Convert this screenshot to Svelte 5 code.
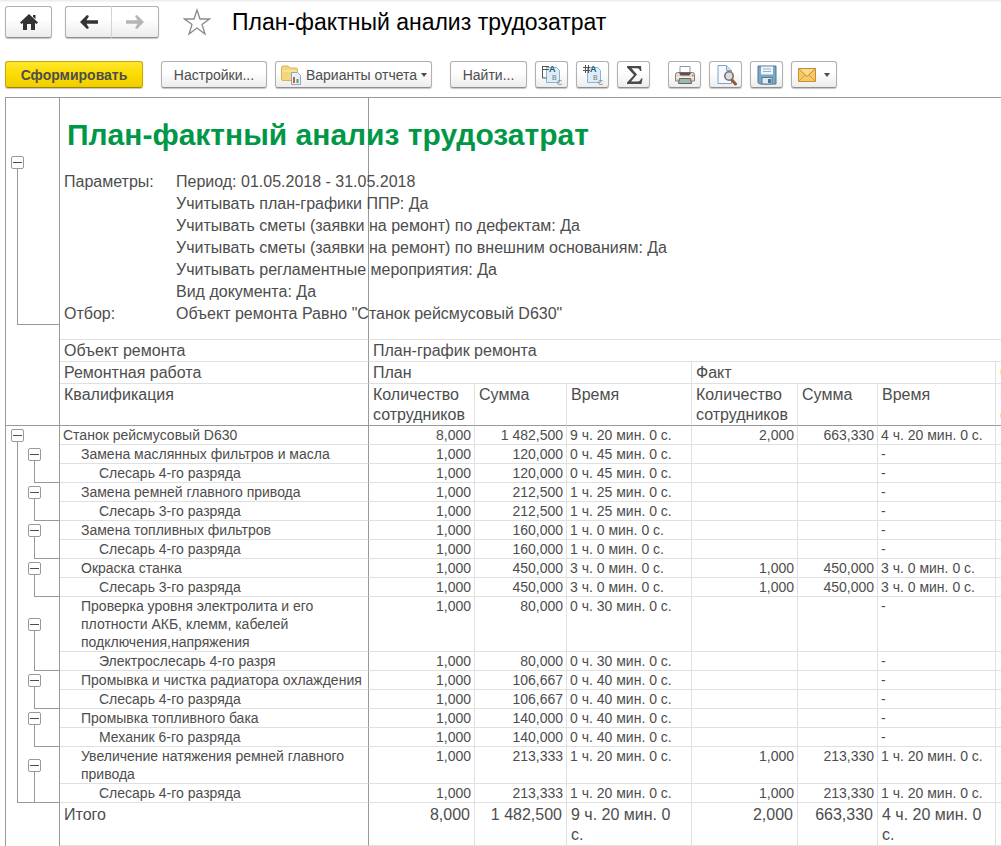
<script lang="ts">
  type Item = {
    name: string;
    plan: string[];
    fact: string[];
    worker: string;
  };

  const title = "План-фактный анализ трудозатрат";

  const params = [
    ["Параметры:", "Период: 01.05.2018 - 31.05.2018"],
    ["", "Учитывать план-графики ППР: Да"],
    ["", "Учитывать сметы (заявки на ремонт) по дефектам: Да"],
    ["", "Учитывать сметы (заявки на ремонт) по внешним основаниям: Да"],
    ["", "Учитывать регламентные мероприятия: Да"],
    ["", "Вид документа: Да"],
    ["Отбор:", 'Объект ремонта Равно "Станок рейсмусовый D630"'],
  ];

  const none = ["", "", "-"];

  const items: Item[] = [
    { name: "Замена маслянных фильтров и масла", plan: ["1,000", "120,000", "0 ч. 45 мин. 0 с."], fact: none, worker: "Слесарь 4-го разряда" },
    { name: "Замена ремней главного привода", plan: ["1,000", "212,500", "1 ч. 25 мин. 0 с."], fact: none, worker: "Слесарь 3-го разряда" },
    { name: "Замена топливных фильтров", plan: ["1,000", "160,000", "1 ч. 0 мин. 0 с."], fact: none, worker: "Слесарь 4-го разряда" },
    { name: "Окраска станка", plan: ["1,000", "450,000", "3 ч. 0 мин. 0 с."], fact: ["1,000", "450,000", "3 ч. 0 мин. 0 с."], worker: "Слесарь 3-го разряда" },
    { name: "Проверка уровня электролита и его плотности АКБ, клемм, кабелей подключения,напряжения", plan: ["1,000", "80,000", "0 ч. 30 мин. 0 с."], fact: none, worker: "Электрослесарь 4-го разря" },
    { name: "Промывка и чистка радиатора охлаждения", plan: ["1,000", "106,667", "0 ч. 40 мин. 0 с."], fact: none, worker: "Слесарь 4-го разряда" },
    { name: "Промывка топливного бака", plan: ["1,000", "140,000", "0 ч. 40 мин. 0 с."], fact: none, worker: "Механик 6-го разряда" },
    { name: "Увеличение натяжения ремней главного привода", plan: ["1,000", "213,333", "1 ч. 20 мин. 0 с."], fact: ["1,000", "213,330", "1 ч. 20 мин. 0 с."], worker: "Слесарь 4-го разряда" },
  ];

  let showParams = $state(true);
  let showItems = $state(true);
  let open = $state(items.map(() => true));
</script>

{#snippet toggle(expanded: boolean, label: string, onclick: () => void)}
  <button class="toggle" aria-expanded={expanded} aria-label={label} {onclick}>
    <svg viewBox="0 0 11 11">
      <path d="M1 5.5h9" />
      {#if !expanded}<path d="M5.5 1v9" />{/if}
    </svg>
  </button>
{/snippet}

{#snippet values(cells: string[])}
  <td class="num">{cells[0]}</td>
  <td class="num">{cells[1]}</td>
  <td>{cells[2]}</td>
{/snippet}

{#snippet sheetIcon(plus: boolean)}
  <svg class="icon" viewBox="0 0 22 22">
    <path d="M5.500 3.500h10l3 3v12h-13z" fill="#dcedf9" stroke="#8bb3cf" />
    {#if plus}
      <path d="M1 3.500h7M1 6.500h7M3.500 1v8M6.500 1v8" stroke="#555" fill="none" />
    {:else}
      <path d="M1 2.500h7M1 5.500h7M1.500 2v12h4" stroke="#555" fill="none" />
    {/if}
    <text x="8" y="8" class="mark a">A</text>
    <text x="11" y="16" class="mark">B</text>
    <text x="16" y="21" class="mark">C</text>
  </svg>
{/snippet}

<header class="top">
  <button class="btn nav" aria-label="Начальная страница">
    <svg width="20" height="18" viewBox="0 0 20 18">
      <path d="M10 1 L19 9.5 L17.5 11 L16 10 V17 H12 V11 H8 V17 H4 V10 L2.5 11 L1 9.5 Z M14 2h2.500v4l-2.500-2z" fill="#333" />
    </svg>
  </button>
  <div class="history">
    <button class="btn nav" aria-label="Назад">
      <svg width="18" height="14" viewBox="0 0 18 14">
        <path d="M0 7 L7 0 L9 1 L6.500 5.300 H18 V8.700 H6.500 L9 13 L7 14 Z" fill="#333" />
      </svg>
    </button>
    <button class="btn nav" aria-label="Вперед">
      <svg width="18" height="14" viewBox="0 0 18 14">
        <path d="M18 7 L11 0 L9 1 L11.500 5.300 H0 V8.700 H11.500 L9 13 L11 14 Z" fill="#b5b5b5" />
      </svg>
    </button>
  </div>
  <button class="star" aria-label="Добавить в избранное">
    <svg width="28" height="28" viewBox="0 0 28 28">
      <path d="M14 2 L17 11 H26.500 L19 16.500 L22 26 L14 20 L6 26 L9 16.500 L1.500 11 H11 Z" fill="#fff" stroke="#8a8a8a" stroke-width="1.300" />
    </svg>
  </button>
  <h1>{title}</h1>
</header>

<div class="toolbar">
  <div class="group">
    <button class="btn primary">Сформировать</button>
  </div>
  <div class="group">
    <button class="btn settings">Настройки...</button>
    <button class="btn variants">
      <svg class="icon" viewBox="0 0 22 22">
        <path d="M1.500 3.500 q0-1.500 1.500-1.500h5l2 2h6q1.500 0 1.500 1.500V15q0 1.500-1.500 1.500H3Q1.500 16.500 1.500 15z" fill="#f3d778" stroke="#d6b45a" />
        <path d="M2.500 7h14" stroke="#fbeeb8" />
        <path d="M11.500 8.500h6l3 3v9h-9z" fill="#e6f2fb" stroke="#8aa9bf" />
        <path d="M14 19v-6" stroke="#d9534f" stroke-width="2" />
        <path d="M17.500 19v-4" stroke="#5a9a4a" stroke-width="2" />
      </svg>
      Варианты отчета
      <span class="caret"></span>
    </button>
  </div>
  <div class="group">
    <button class="btn find">Найти...</button>
    <button class="btn tool" aria-label="Развернуть группы">{@render sheetIcon(false)}</button>
    <button class="btn tool" aria-label="Свернуть группы">{@render sheetIcon(true)}</button>
    <button class="btn tool" aria-label="Сумма">
      <svg class="icon" viewBox="0 0 22 22">
        <path d="M4 2h14l.5 5h-1.500q-.5-2.800-3-2.800H8.500L14 10.500 8 17.500h6.500q3 0 3.500-3h1.500L18.500 20H4v-1.500l7-7.500L4 3.500z" fill="#4a4a4a" />
      </svg>
    </button>
  </div>
  <div class="group">
    <button class="btn tool" aria-label="Печать">
      <svg class="icon" viewBox="0 0 22 22">
        <path d="M6 9V2.500h10V9" fill="#fff" stroke="#8d9aa5" />
        <path d="M3.500 8.500h15q2 0 2 2V17h-19v-6.500q0-2 2-2z" fill="#e4d9cb" stroke="#8a8078" />
        <path d="M5 8.500h12l-1.500 3h-9z" fill="#5c5148" />
        <path d="M2 13.500h18" stroke="#f7f3ec" />
        <path d="M5.500 14.500h11l1 5h-13z" fill="#9db8ae" stroke="#666" />
        <path d="M18 11.500h1.500" stroke="#d2672c" stroke-width="1.500" />
      </svg>
    </button>
    <button class="btn tool" aria-label="Предварительный просмотр">
      <svg class="icon" viewBox="0 0 22 22">
        <path d="M3 1.500h8.500l5 5v13H3z" fill="#f3f9fe" stroke="#7ba4c4" />
        <path d="M11.500 1.500v5h5" fill="#cfe4f4" stroke="#7ba4c4" />
        <path d="M16.500 15.500l4 4.500" stroke="#8d5a3c" stroke-width="3" stroke-linecap="round" />
        <circle cx="14" cy="12" r="4.200" fill="#c9e2f3" stroke="#96664a" stroke-width="1.600" />
      </svg>
    </button>
    <button class="btn tool" aria-label="Сохранить">
      <svg class="icon" viewBox="0 0 22 22">
        <path d="M2 2h18v18H3.500L2 18.500z" fill="#7ba7c4" stroke="#4f7690" />
        <path d="M5 2.500h12v8H5z" fill="#eef6fb" />
        <path d="M7 5h8M7 7.500h8" stroke="#96b3c6" />
        <path d="M6 13.500h10V20H6z" fill="#e4ebef" stroke="#567a92" />
        <path d="M12 15h3v4h-3z" fill="#4f7690" />
      </svg>
    </button>
    <button class="btn mail" aria-label="Отправить по почте">
      <svg width="18" height="14" viewBox="0 0 18 14">
        <path d="M.5 .5h17v13H.5z" fill="#f7c866" stroke="#c98d2c" />
        <path d="M1 13l6-6M17 13l-6-6" stroke="#d99e3c" fill="none" />
        <path d="M1 1l8 7.500L17 1" fill="#fad98c" stroke="#c98d2c" />
      </svg>
      <span class="caret"></span>
    </button>
  </div>
</div>

<main class="sheet">
  <table>
    <colgroup>
      <col class="c-outer" />
      <col class="c-inner" />
      <col class="c-name" />
      <col class="c-count" />
      <col class="c-sum" />
      <col class="c-time" />
      <col class="c-count" />
      <col class="c-fact-sum" />
      <col class="c-fact-time" />
      <col class="c-count" />
    </colgroup>

    <tbody class="intro">
      <tr>
        <td></td>
        <td class="edge"></td>
        <td class="name"><h2>{title}</h2></td>
        <td colspan="7"></td>
      </tr>
      <tr class="gap">
        <td class="tree" class:from={showParams}>
          {@render toggle(showParams, "Параметры отчета", () => (showParams = !showParams))}
        </td>
        <td class="edge"></td>
        <td class="name"></td>
        <td colspan="7"></td>
      </tr>
      {#if showParams}
        {#each params as [label, value], i}
          <tr>
            <td class="tree through" class:last={i === params.length - 1}></td>
            <td class="edge"></td>
            <td class="name">
              <div class="param"><span>{label}</span><span>{value}</span></div>
            </td>
            <td colspan="7"></td>
          </tr>
        {/each}
      {/if}
      <tr class="tail">
        <td></td>
        <td class="edge"></td>
        <td class="name line"></td>
        <td class="line" colspan="7"></td>
      </tr>
    </tbody>

    <tbody class="heads">
      <tr>
        <td></td>
        <td class="edge"></td>
        <th class="name">Объект ремонта</th>
        <th colspan="7">План-график ремонта</th>
      </tr>
      <tr>
        <td></td>
        <td class="edge"></td>
        <th class="name">Ремонтная работа</th>
        <th colspan="3">План</th>
        <th colspan="3">Факт</th>
        <th class="diff">Отклонение</th>
      </tr>
      <tr class="bottom">
        <td></td>
        <td class="edge"></td>
        <th class="name">Квалификация</th>
        <th>Количество сотрудников</th>
        <th>Сумма</th>
        <th>Время</th>
        <th>Количество сотрудников</th>
        <th>Сумма</th>
        <th>Время</th>
        <th class="diff">Количество сотрудников</th>
      </tr>
    </tbody>

    <tbody class="data">
      <tr>
        <td class="tree" class:from={showItems}>
          {@render toggle(showItems, "Станок рейсмусовый D630", () => (showItems = !showItems))}
        </td>
        <td class="edge"></td>
        <td class="name">Станок рейсмусовый D630</td>
        {@render values(["8,000", "1 482,500", "9 ч. 20 мин. 0 с."])}
        {@render values(["2,000", "663,330", "4 ч. 20 мин. 0 с."])}
        <td></td>
      </tr>
      {#if showItems}
        {#each items as item, i}
          {@const last = i === items.length - 1}
          <tr>
            <td class="tree through" class:last={last && !open[i]}></td>
            <td class="tree edge" class:from={open[i]}>
              {@render toggle(open[i], item.name, () => (open[i] = !open[i]))}
            </td>
            <td class="name level-1">{item.name}</td>
            {@render values(item.plan)}
            {@render values(item.fact)}
            <td></td>
          </tr>
          {#if open[i]}
            <tr>
              <td class="tree through" class:last></td>
              <td class="tree edge through last"></td>
              <td class="name level-2">{item.worker}</td>
              {@render values(item.plan)}
              {@render values(item.fact)}
              <td></td>
            </tr>
          {/if}
        {/each}
      {/if}
    </tbody>

    <tfoot>
      <tr>
        <td></td>
        <td class="edge"></td>
        <td class="name">Итого</td>
        {@render values(["8,000", "1 482,500", "9 ч. 20 мин. 0 с."])}
        {@render values(["2,000", "663,330", "4 ч. 20 мин. 0 с."])}
        <td></td>
      </tr>
    </tfoot>
  </table>
</main>

<style>
  :global(body) {
    background: #fff;
    color: #4d4d4d;
    font-family: "Liberation Sans", Arial, sans-serif;
    font-size: 16px;
  }

  button {
    margin: 0;
    padding: 0;
    color: inherit;
    font-family: inherit;
    cursor: pointer;
  }

  svg {
    display: block;
    flex: none;
  }

  /* title bar */
  .top {
    display: flex;
    align-items: center;
    height: 32px;
    padding: 6px 5px 0;
    box-shadow: inset 0 3px 3px -2px #e4e4e4;
  }

  .btn {
    display: flex;
    align-items: center;
    justify-content: center;
    box-sizing: border-box;
    height: 27px;
    border: 1px solid #b0b0b0;
    border-bottom-color: #8f8f8f;
    border-radius: 3px;
    background: linear-gradient(#fff 40%, #ececec);
    box-shadow: 0 1px 1px #c4c4c4;
    font-size: 14px;
    white-space: nowrap;
  }

  .nav {
    width: 47px;
    height: 32px;
  }

  .history {
    display: flex;
    margin-left: 13px;
  }

  .history .btn:first-child {
    border-right-color: #d5d5d5;
    border-radius: 3px 0 0 3px;
  }

  .history .btn:last-child {
    border-left: 0;
    border-radius: 0 3px 3px 0;
  }

  .star {
    margin-left: 24px;
    border: 0;
    background: none;
  }

  h1 {
    margin: 0 0 0 21px;
    color: #000;
    font-size: 23px;
    font-weight: normal;
    white-space: nowrap;
  }

  /* command bar */
  .toolbar {
    display: flex;
    gap: 18px;
    padding: 23px 5px 9px;
  }

  .group {
    display: flex;
    gap: 8px;
  }

  .primary {
    width: 138px;
    border-color: #c9a800;
    border-bottom-color: #a08600;
    background: linear-gradient(#ffe72e, #fbdc00 50%, #efce00);
    font-weight: bold;
  }

  .settings {
    width: 106px;
  }

  .variants {
    gap: 4px;
    width: 157px;
  }

  .find {
    width: 77px;
  }

  .tool {
    width: 33px;
  }

  .mail {
    gap: 8px;
    width: 46px;
  }

  .icon {
    width: 22px;
    height: 22px;
  }

  .mark {
    fill: #777;
    font-size: 7px;
  }

  .mark.a {
    fill: #24597c;
    font-size: 9px;
    font-weight: bold;
  }

  .caret {
    border: 3px solid transparent;
    border-top: 4px solid #4d4d4d;
    border-bottom: 0;
  }

  /* report */
  .sheet {
    margin-left: 5px;
    border-top: 1px solid #999;
    border-left: 1px solid #999;
    overflow: hidden;
  }

  table {
    width: 100%;
    border-spacing: 0;
    table-layout: fixed;
  }

  .c-outer {
    width: 21px;
  }

  .c-inner {
    width: 33px;
  }

  .c-name {
    width: 309px;
  }

  .c-count {
    width: 106px;
  }

  .c-sum {
    width: 92px;
  }

  .c-time {
    width: 125px;
  }

  .c-fact-sum {
    width: 80px;
  }

  .c-fact-time {
    width: 118px;
  }

  td,
  th {
    padding: 0;
    font-weight: normal;
    text-align: left;
    vertical-align: top;
  }

  td.edge,
  .name {
    border-right: 1px solid #999;
  }

  .intro .name {
    padding-left: 4px;
    white-space: nowrap;
  }

  h2 {
    margin: 0;
    padding: 18px 0 0 3px;
    color: #009846;
    font-size: 30px;
    font-weight: bold;
    line-height: 38px;
  }

  .gap td {
    height: 17px;
  }

  .param {
    display: grid;
    grid-template-columns: 112px auto;
    line-height: 22px;
  }

  .tail td {
    box-sizing: border-box;
    height: 15px;
  }

  .line {
    border-bottom: 1px solid #e0e0e0;
  }

  .heads th {
    padding: 1px 0 0 4px;
    border-right: 1px solid #e0e0e0;
    border-bottom: 1px solid #e0e0e0;
    line-height: 20px;
  }

  .heads .name {
    border-right-color: #999;
  }

  .heads .bottom > * {
    border-bottom: 1px solid #999;
  }

  .heads .diff {
    color: #f5a623;
  }

  .data,
  tfoot {
    font-size: 14px;
    line-height: 18px;
  }

  .data td:nth-child(n + 3),
  tfoot td:nth-child(n + 3) {
    padding: 0 3px;
    border-right: 1px solid #e0e0e0;
    border-bottom: 1px solid #e0e0e0;
  }

  .data td.name,
  tfoot td.name {
    border-right-color: #999;
  }

  .data td.level-1 {
    padding-left: 21px;
  }

  .data td.level-2 {
    padding-left: 39px;
  }

  .data td.num,
  tfoot td.num {
    text-align: right;
  }

  tfoot {
    font-size: 16px;
    line-height: 20px;
  }

  tfoot td:nth-child(n + 3) {
    padding: 2px 4px 0;
  }

  /* group brackets */
  td.tree {
    position: relative;
    vertical-align: middle;
  }

  .tree::after {
    position: absolute;
    top: 0;
    right: 0;
    bottom: 0;
    left: 11px;
  }

  .tree.edge::after {
    left: 7px;
  }

  .tree.from::after {
    top: 50%;
    border-left: 1px solid #999;
    content: "";
  }

  .tree.through::after {
    border-left: 1px solid #999;
    content: "";
  }

  .tree.last::after {
    border-bottom: 1px solid #999;
  }

  /* the outer bracket closes across the inner column */
  .tree.last:not(.edge)::after {
    right: -32px;
  }

  .toggle {
    display: block;
    position: relative;
    z-index: 1;
    box-sizing: border-box;
    width: 13px;
    height: 13px;
    margin-left: 5px;
    border: 1px solid #999;
    border-radius: 2px;
    background: #fff;
  }

  .edge .toggle {
    margin-left: 1px;
  }

  .toggle svg {
    width: 11px;
    height: 11px;
    stroke: #4d4d4d;
  }
</style>
